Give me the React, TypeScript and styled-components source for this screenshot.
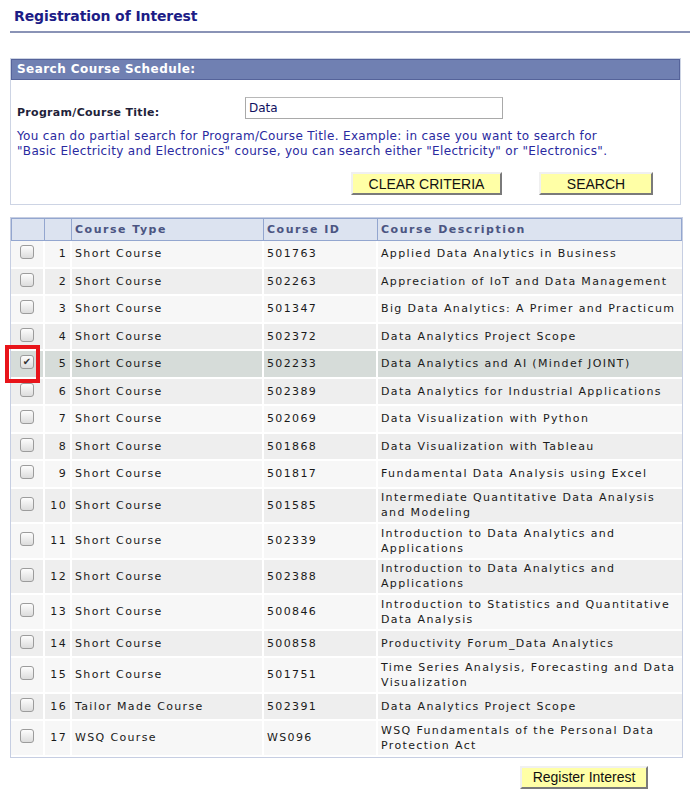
import React from "react";
import styled, { createGlobalStyle } from "styled-components";

const Global = createGlobalStyle`
  html, body { margin: 0; padding: 0; background: #fff; }
  body { font-family: "DejaVu Sans", Verdana, sans-serif; }
`;

const Page = styled.div`
  width: 696px;
  padding: 8px 0 0 10px;
  box-sizing: border-box;
  position: relative;
`;

const TitleBar = styled.div`
  margin-right: 6px;
  padding: 0 0 6px 4px;
  border-bottom: 2px solid #8a93b6;
`;

const Title = styled.h1`
  margin: 0;
  font-size: 14px;
  font-weight: bold;
  color: #1c1c86;
  line-height: 17px;
  letter-spacing: -0.1px;
`;

const SearchBox = styled.section`
  margin-top: 25px;
  width: 671px;
  border: 1px solid #cdd4e4;
  box-sizing: border-box;
`;

const SearchHead = styled.div`
  height: 19px;
  background: #7080b2;
  border: 1px solid #55639a;
  color: #fff;
  font-size: 12px;
  font-weight: bold;
  letter-spacing: 0.45px;
  line-height: 18px;
  padding-left: 5px;
`;

const SearchBody = styled.div`
  padding: 17px 6px 9px 6px;
`;

const FieldRow = styled.div`
  display: grid;
  grid-template-columns: 228px 258px;
  align-items: center;
`;

const Label = styled.label`
  font-size: 11px;
  font-weight: bold;
  color: #1f1f3a;
  letter-spacing: 0.3px;
  padding-top: 8px;
`;

const TextInput = styled.input`
  height: 22px;
  box-sizing: border-box;
  border: 1px solid #a9a9a9;
  border-top-color: #b8b8b8;
  font-family: "DejaVu Sans", Verdana, sans-serif;
  font-size: 12px;
  padding: 0 3px;
  color: #101060;
  outline: none;
`;

const Help = styled.p`
  margin: 10px 0 0 0;
  font-size: 12px;
  letter-spacing: 0.33px;
  line-height: 15px;
  color: #2a2aa0;
  white-space: nowrap;
`;

const ButtonRow = styled.div`
  display: flex;
  gap: 37px;
  padding-left: 334px;
  margin-top: 13px;
`;

const YellowButton = styled.button<{ $w: number }>`
  width: ${(p) => p.$w}px;
  height: 23px;
  background: #ffffa6;
  border: 2px solid;
  border-color: #f0f0f0 #7a7a7a #7a7a7a #f0f0f0;
  font-family: "Liberation Sans", Arial, sans-serif;
  font-size: 14px;
  color: #111;
  padding: 0;
  cursor: pointer;
`;

const Table = styled.table`
  margin-top: 12px;
  width: 673px;
  border-collapse: separate;
  border-spacing: 0;
  border: 1px solid #c6cee2;
  table-layout: fixed;
  font-size: 11px;
  letter-spacing: 1.35px;
  color: #1a1a1a;
`;

const Col = styled.col<{ $w: number }>`
  width: ${(p) => p.$w}px;
`;

const Th = styled.th`
  box-sizing: border-box;
  height: 23px;
  background: #dce3f0;
  border: 1px solid #93a6cf;
  border-left-width: 0;
  text-align: left;
  padding: 0 3px;
  font-size: 11px;
  font-weight: bold;
  letter-spacing: 1.5px;
  color: #4b5582;
  &:first-child { border-left-width: 1px; }
`;

const Tr = styled.tr<{ $bg: string }>`
  background: ${(p) => p.$bg};
`;

const Td = styled.td<{ $align?: string }>`
  box-sizing: border-box;
  border-right: 2px solid #fff;
  border-bottom: 2px solid #fff;
  padding: 1.75px 3px;
  line-height: 15px;
  text-align: ${(p) => p.$align || "left"};
  vertical-align: middle;
  &:last-child { border-right: 0; padding-right: 0; }
`;

const CheckCell = styled.td`
  border-right: 2px solid #fff;
  border-bottom: 2px solid #fff;
  text-align: center;
  vertical-align: middle;
  padding: 0 0 3px 0;
  height: 22.5px;
`;

const Box = styled.span`
  display: inline-block;
  width: 12px;
  height: 12px;
  border: 1px solid #9c9c9c;
  border-radius: 3px;
  background: linear-gradient(#fdfdfd, #dcdcdc);
  color: #333;
  font-size: 10px;
  line-height: 12px;
  text-align: center;
  letter-spacing: 0;
  vertical-align: middle;
`;

const Highlight = styled.div`
  position: absolute;
  left: 5px;
  top: 345px;
  width: 27px;
  height: 30px;
  border: 4px solid #e8141a;
  pointer-events: none;
`;

const Footer = styled.div`
  display: flex;
  justify-content: flex-end;
  width: 673px;
  padding-right: 35px;
  box-sizing: border-box;
  margin-top: 8px;
`;

const rows: [string, string, string][] = [
  ["Short Course", "501763", "Applied Data Analytics in Business"],
  ["Short Course", "502263", "Appreciation of IoT and Data Management"],
  ["Short Course", "501347", "Big Data Analytics: A Primer and Practicum"],
  ["Short Course", "502372", "Data Analytics Project Scope"],
  ["Short Course", "502233", "Data Analytics and AI (Mindef JOINT)"],
  ["Short Course", "502389", "Data Analytics for Industrial Applications"],
  ["Short Course", "502069", "Data Visualization with Python"],
  ["Short Course", "501868", "Data Visualization with Tableau"],
  ["Short Course", "501817", "Fundamental Data Analysis using Excel"],
  ["Short Course", "501585", "Intermediate Quantitative Data Analysis and Modeling"],
  ["Short Course", "502339", "Introduction to Data Analytics and Applications"],
  ["Short Course", "502388", "Introduction to Data Analytics and Applications"],
  ["Short Course", "500846", "Introduction to Statistics and Quantitative Data Analysis"],
  ["Short Course", "500858", "Productivity Forum_Data Analytics"],
  ["Short Course", "501751", "Time Series Analysis, Forecasting and Data Visualization"],
  ["Tailor Made Course", "502391", "Data Analytics Project Scope"],
  ["WSQ Course", "WS096", "WSQ Fundamentals of the Personal Data Protection Act"],
];

export default function App() {
  return (
    <Page>
      <Global />
      <TitleBar>
        <Title>Registration of Interest</Title>
      </TitleBar>
      <SearchBox>
        <SearchHead>Search Course Schedule:</SearchHead>
        <SearchBody>
          <FieldRow>
            <Label>Program/Course Title:</Label>
            <TextInput defaultValue="Data" />
          </FieldRow>
          <Help>
            You can do partial search for Program/Course Title. Example: in case you want to search for
            <br />
            "Basic Electricity and Electronics" course, you can search either "Electricity" or "Electronics".
          </Help>
          <ButtonRow>
            <YellowButton $w={151}>CLEAR CRITERIA</YellowButton>
            <YellowButton $w={114}>SEARCH</YellowButton>
          </ButtonRow>
        </SearchBody>
      </SearchBox>
      <Table>
        <colgroup>
          <Col $w={34} />
          <Col $w={27} />
          <Col $w={192} />
          <Col $w={114} />
          <Col $w={304} />
        </colgroup>
        <thead>
          <tr>
            <Th></Th>
            <Th></Th>
            <Th>Course Type</Th>
            <Th>Course ID</Th>
            <Th>Course Description</Th>
          </tr>
        </thead>
        <tbody>
          {rows.map((r, i) => {
            const checked = i === 4;
            const bg = checked ? "#d6dcd9" : i % 2 === 0 ? "#f7f7f7" : "#eeeeee";
            return (
              <Tr key={i} $bg={bg}>
                <CheckCell>
                  <Box>{checked ? "✔" : ""}</Box>
                </CheckCell>
                <Td $align="right">{i + 1}</Td>
                <Td>{r[0]}</Td>
                <Td>{r[1]}</Td>
                <Td>{r[2]}</Td>
              </Tr>
            );
          })}
        </tbody>
      </Table>
      <Footer>
        <YellowButton $w={128}>Register Interest</YellowButton>
      </Footer>
      <Highlight />
    </Page>
  );
}
